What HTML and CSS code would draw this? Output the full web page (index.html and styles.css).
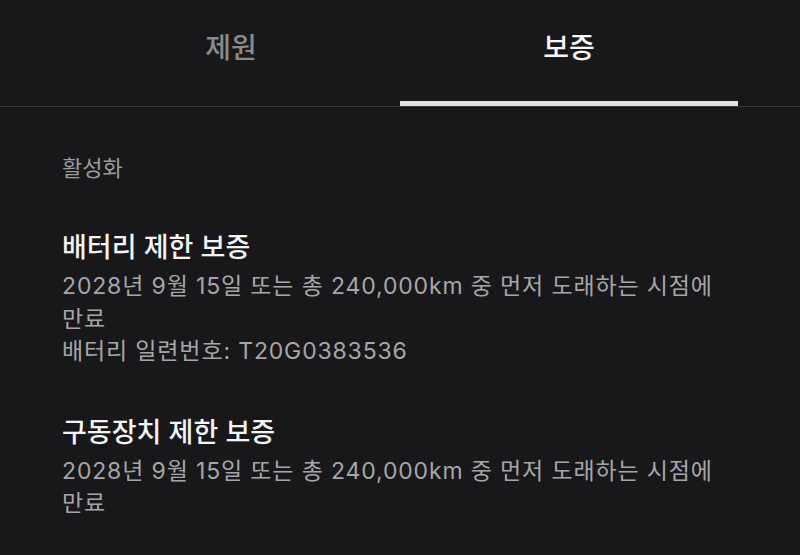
FILE: index.html
```html
<!DOCTYPE html>
<html lang="ko">
<head>
<meta charset="utf-8">
<link rel="stylesheet" href="styles.css">
</head>
<body>
  <nav class="tabs">
    <div class="tab">제원</div>
    <div class="tab tab-active">보증</div>
  </nav>
  <main class="content">
    <div class="section-label">활성화</div>
    <section class="warranty">
      <h2 class="warranty-title">배터리 제한 보증</h2>
      <p class="warranty-desc">2028년 9월 15일 또는 총 240,000km 중 먼저 도래하는 시점에 만료</p>
      <p class="warranty-desc">배터리 일련번호: T20G0383536</p>
    </section>
    <section class="warranty">
      <h2 class="warranty-title">구동장치 제한 보증</h2>
      <p class="warranty-desc">2028년 9월 15일 또는 총 240,000km 중 먼저 도래하는 시점에 만료</p>
    </section>
  </main>
</body>
</html>
```
FILE: styles.css
```css
html, body {
  margin: 0;
  padding: 0;
  background: #18181a;
}
body {
  font-family: "Inter", "Noto Sans CJK KR", sans-serif;
  color: #f2f2f2;
  width: 800px;
  height: 555px;
  overflow: hidden;
}
.tabs {
  display: flex;
  padding: 0 62px;
  border-bottom: 1px solid #38383a;
}
.tab {
  flex: 1;
  box-sizing: border-box;
  height: 106px;
  padding-top: 29px;
  text-align: center;
  font-size: 28px;
  line-height: 38px;
  font-weight: 500;
  color: #8a8a8c;
}
.tab-active {
  color: #f7f7f7;
  border-bottom: 5px solid #e2e2e2;
}
.content {
  padding: 46px 62px 0;
}
.section-label {
  font-size: 22px;
  line-height: 30px;
  color: #9a9a9c;
  margin-bottom: 47px;
}
.warranty {
  margin-bottom: 47px;
}
.warranty-title {
  margin: 0 0 4px;
  font-size: 27px;
  line-height: 36px;
  font-weight: 500;
  color: #f4f4f4;
}
.warranty-desc {
  margin: 0;
  font-size: 23px;
  line-height: 32.5px;
  color: #a6a6a8;
  letter-spacing: 0.85px;
}
```
